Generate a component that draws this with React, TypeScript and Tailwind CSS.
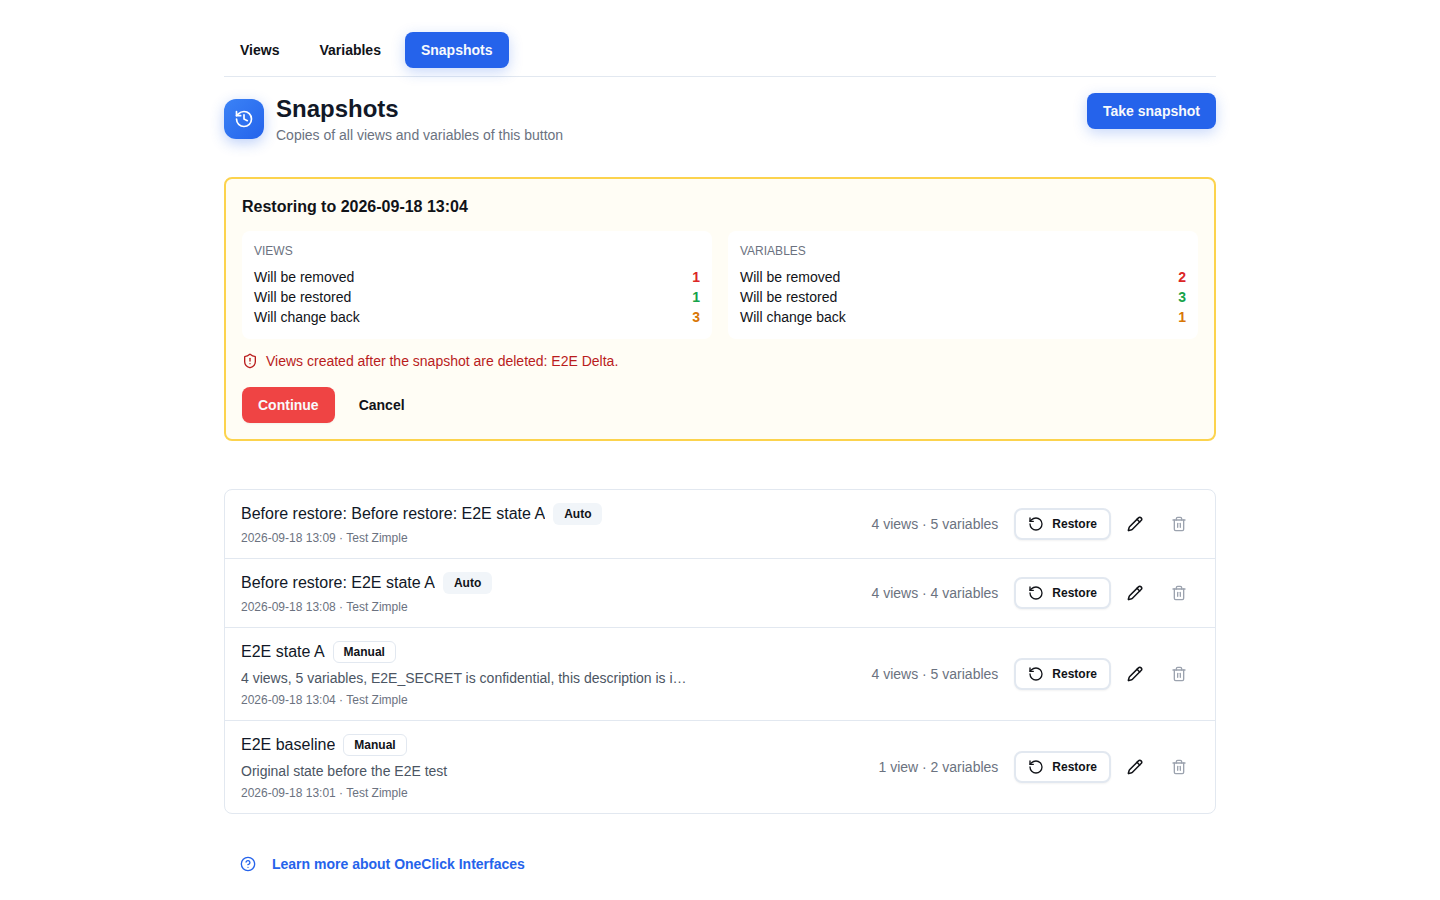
import { useState } from "react";
import { clsx } from "clsx";
import {
  CircleQuestionMark,
  History,
  Pencil,
  RotateCcw,
  ShieldAlert,
  Trash2,
} from "lucide-react";

type Snapshot = {
  id: string;
  name: string;
  kind: "Auto" | "Manual";
  description?: string;
  createdAt: string;
  author: string;
  views: number;
  variables: number;
};

type Diff = {
  title: string;
  removed: number;
  restored: number;
  changed: number;
};

const TABS = ["Views", "Variables", "Snapshots"];

const DIFFS: Diff[] = [
  { title: "Views", removed: 1, restored: 1, changed: 3 },
  { title: "Variables", removed: 2, restored: 3, changed: 1 },
];

const SNAPSHOTS: Snapshot[] = [
  {
    id: "s4",
    name: "Before restore: Before restore: E2E state A",
    kind: "Auto",
    createdAt: "2026-09-18 13:09",
    author: "Test Zimple",
    views: 4,
    variables: 5,
  },
  {
    id: "s3",
    name: "Before restore: E2E state A",
    kind: "Auto",
    createdAt: "2026-09-18 13:08",
    author: "Test Zimple",
    views: 4,
    variables: 4,
  },
  {
    id: "s2",
    name: "E2E state A",
    kind: "Manual",
    description: "4 views, 5 variables, E2E_SECRET is confidential, this description is i…",
    createdAt: "2026-09-18 13:04",
    author: "Test Zimple",
    views: 4,
    variables: 5,
  },
  {
    id: "s1",
    name: "E2E baseline",
    kind: "Manual",
    description: "Original state before the E2E test",
    createdAt: "2026-09-18 13:01",
    author: "Test Zimple",
    views: 1,
    variables: 2,
  },
];

const plural = (n: number, word: string) => `${n} ${word}${n === 1 ? "" : "s"}`;

function DiffCard({ diff }: { diff: Diff }) {
  const rows = [
    { label: "Will be removed", value: diff.removed, color: "text-[#dc2626]" },
    { label: "Will be restored", value: diff.restored, color: "text-[#16a34a]" },
    { label: "Will change back", value: diff.changed, color: "text-[#d97706]" },
  ];

  return (
    <section className="rounded-lg bg-white p-3">
      <h3 className="mb-2 text-xs uppercase text-[#6b7280]">{diff.title}</h3>
      <dl className="text-sm">
        {rows.map((row) => (
          <div key={row.label} className="flex justify-between">
            <dt>{row.label}</dt>
            <dd className={clsx("font-semibold", row.color)}>{row.value}</dd>
          </div>
        ))}
      </dl>
    </section>
  );
}

function SnapshotRow({ snapshot }: { snapshot: Snapshot }) {
  return (
    <li className="flex items-center gap-4 px-4 py-3">
      <div className="flex min-w-0 flex-1 flex-col gap-1">
        <div className="flex h-6 items-center gap-2">
          <span className="truncate text-base text-[#111827]">{snapshot.name}</span>
          <span
            className={clsx(
              "rounded-md border px-2.5 py-0.5 text-xs font-semibold",
              snapshot.kind === "Auto"
                ? "border-transparent bg-[#f1f5f9]"
                : "border-[#e2e8f0]"
            )}
          >
            {snapshot.kind}
          </span>
        </div>
        {snapshot.description && (
          <p className="max-w-md truncate text-sm text-[#4b5563]">{snapshot.description}</p>
        )}
        <p className="text-xs text-[#6b7280]">
          {snapshot.createdAt} · {snapshot.author}
        </p>
      </div>

      <span className="text-sm whitespace-nowrap text-[#6b7280]">
        {plural(snapshot.views, "view")} · {plural(snapshot.variables, "variable")}
      </span>

      <div className="flex items-center gap-1">
        <button
          type="button"
          className="flex h-8 items-center gap-2 rounded-lg border-2 border-[#e2e8f0] bg-white px-3 text-xs font-semibold shadow-xs hover:bg-[#f1f5f9]"
        >
          <RotateCcw className="size-4" />
          Restore
        </button>
        <button
          type="button"
          aria-label="Edit"
          className="flex h-8 items-center rounded-lg px-3 hover:bg-[#f1f5f9]"
        >
          <Pencil className="size-4" strokeWidth={2.25} />
        </button>
        <button
          type="button"
          aria-label="Delete"
          className="flex h-8 items-center rounded-lg px-3 text-[#9ca3af] hover:bg-[#f1f5f9]"
        >
          <Trash2 className="size-4" />
        </button>
      </div>
    </li>
  );
}

export default function App() {
  const [activeTab, setActiveTab] = useState("Snapshots");

  return (
    <div className="mx-auto max-w-5xl px-4 pt-8 font-['Liberation_Sans',Arial,sans-serif] text-[#111318]">
      {/* ── Tabs ── */}
      <nav className="flex gap-2 border-b border-[#e2e8f0] pb-2">
        {TABS.map((tab) => (
          <button
            key={tab}
            type="button"
            onClick={() => setActiveTab(tab)}
            className={clsx(
              "h-9 rounded-lg px-4 text-sm font-semibold",
              tab === activeTab &&
                "bg-[#2563eb] text-[#f8fafc] shadow-[0_4px_14px_rgba(37,99,235,0.25)]"
            )}
          >
            {tab}
          </button>
        ))}
      </nav>

      {/* ── Header ── */}
      <header className="mt-4 flex items-start justify-between">
        <div className="flex items-center gap-3">
          <div className="flex size-10 items-center justify-center rounded-xl bg-linear-to-br from-[#3b82f6] to-[#2563eb] text-white shadow-[0_4px_14px_rgba(37,99,235,0.3)]">
            <History className="size-5" />
          </div>
          <div>
            <h1 className="text-2xl font-bold text-[#111827]">Snapshots</h1>
            <p className="text-sm text-[#6b7280]">
              Copies of all views and variables of this button
            </p>
          </div>
        </div>
        <button
          type="button"
          className="h-9 rounded-lg bg-[#2563eb] px-4 text-sm font-semibold text-[#f8fafc] shadow-[0_4px_14px_rgba(37,99,235,0.25)] hover:bg-[#1d4ed8]"
        >
          Take snapshot
        </button>
      </header>

      {/* ── Restore preview ── */}
      <section className="mt-8 rounded-lg border-2 border-[#fcd34d] bg-[#fffdf5] p-4">
        <h2 className="text-base font-semibold">Restoring to 2026-09-18 13:04</h2>
        <div className="mt-3 grid grid-cols-2 gap-4">
          {DIFFS.map((diff) => (
            <DiffCard key={diff.title} diff={diff} />
          ))}
        </div>
        <p className="mt-3 flex items-center gap-2 text-sm text-[#b91c1c]">
          <ShieldAlert className="size-4" />
          Views created after the snapshot are deleted: E2E Delta.
        </p>
        <div className="mt-4 flex gap-2">
          <button
            type="button"
            className="h-9 rounded-lg bg-[#ef4444] px-4 text-sm font-semibold text-[#f8fafc] shadow-xs hover:bg-[#dc2626]"
          >
            Continue
          </button>
          <button type="button" className="h-9 rounded-lg px-4 text-sm font-semibold">
            Cancel
          </button>
        </div>
      </section>

      {/* ── Snapshot list ── */}
      <ul className="mt-12 divide-y divide-[#e2e8f0] rounded-lg border border-[#e2e8f0]">
        {SNAPSHOTS.map((snapshot) => (
          <SnapshotRow key={snapshot.id} snapshot={snapshot} />
        ))}
      </ul>

      <a
        href="#"
        className="mt-8 inline-flex h-9 items-center gap-4 px-4 text-sm font-semibold text-[#2563eb] hover:underline"
      >
        <CircleQuestionMark className="size-4" />
        Learn more about OneClick Interfaces
      </a>
    </div>
  );
}
